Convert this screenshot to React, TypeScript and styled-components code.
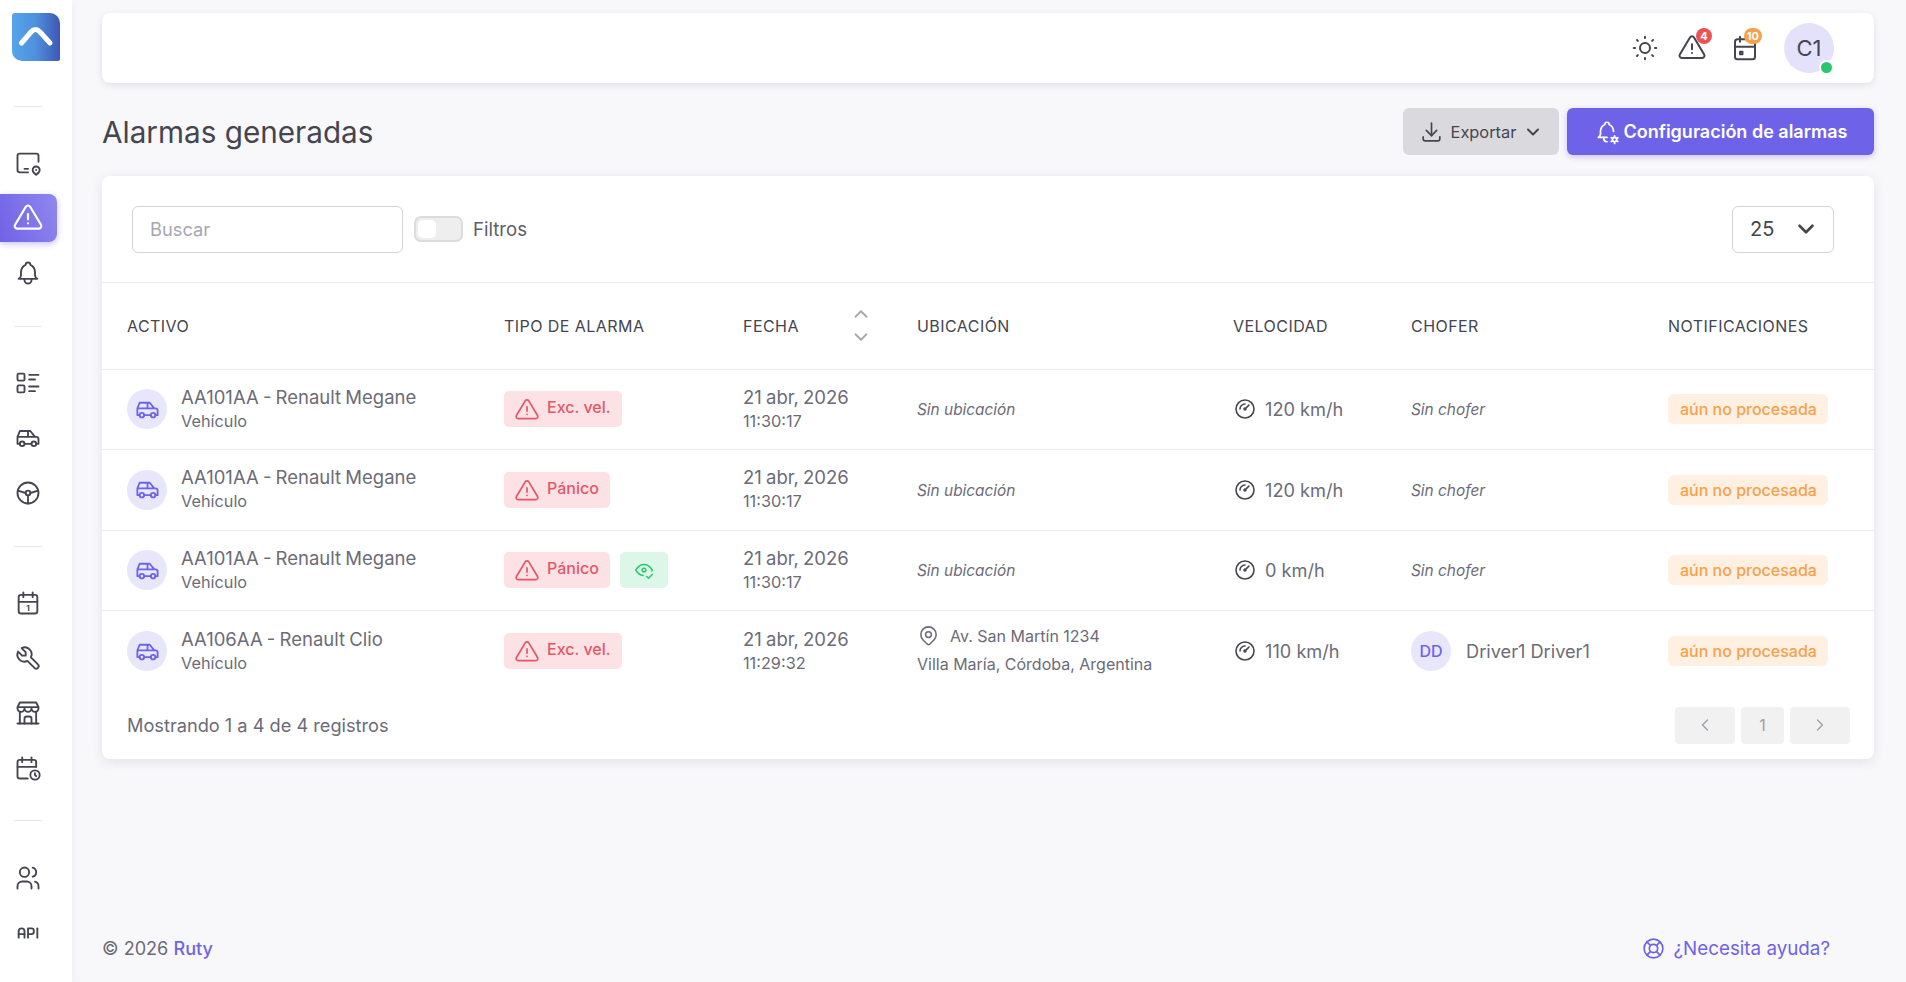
import React from 'react';
import styled, { createGlobalStyle } from 'styled-components';
import {
  TbAlertTriangle,
  TbApi,
  TbBell,
  TbBellCog,
  TbBuildingStore,
  TbCalendarEvent,
  TbCalendarTime,
  TbCar,
  TbChevronDown,
  TbChevronLeft,
  TbChevronRight,
  TbChevronUp,
  TbDeviceIpadHorizontalPin,
  TbDownload,
  TbEyeCheck,
  TbGauge,
  TbLifebuoy,
  TbListDetails,
  TbMapPin,
  TbSteeringWheel,
  TbSun,
  TbTool,
  TbUsers,
} from 'react-icons/tb';

interface Alarm {
  id: number;
  name: string;
  type: string;
  seen?: boolean;
  time: string;
  address?: string[];
  speed: string;
  driver?: string;
}

const alarms: Alarm[] = [
  { id: 1, name: 'AA101AA - Renault Megane', type: 'Exc. vel.', time: '11:30:17', speed: '120 km/h' },
  { id: 2, name: 'AA101AA - Renault Megane', type: 'Pánico', time: '11:30:17', speed: '120 km/h' },
  { id: 3, name: 'AA101AA - Renault Megane', type: 'Pánico', seen: true, time: '11:30:17', speed: '0 km/h' },
  {
    id: 4,
    name: 'AA106AA - Renault Clio',
    type: 'Exc. vel.',
    time: '11:29:32',
    address: ['Av. San Martín 1234', 'Villa María, Córdoba, Argentina'],
    speed: '110 km/h',
    driver: 'Driver1 Driver1',
  },
];

const GlobalStyle = createGlobalStyle`
  html, body {
    margin: 0;
    padding: 0;
    height: 100%;
    background: #f8f8fb;
    font-family: Inter, "Liberation Sans", sans-serif;
    color: #6c6b77;
  }
  * { box-sizing: border-box; }
  svg { stroke-width: 1.6; }
`;

const Layout = styled.div`
  display: flex;
  height: 982px;
  overflow: hidden;
`;

const Sidebar = styled.aside`
  width: 72px;
  flex-shrink: 0;
  background: #fff;
  box-shadow: 0 2px 8px rgba(75, 70, 92, 0.08);
  display: flex;
  flex-direction: column;
  padding-top: 13px;
`;

const Logo = styled.div`
  width: 48px;
  height: 48px;
  margin-left: 12px;
  border-radius: 3px 10px 2px 10px;
  background: linear-gradient(90deg, #55a5ea 0%, #4f8fdc 50%, #3e57b5 100%);
  display: flex;
`;

const Divider = styled.div<{ $top: number; $bottom: number }>`
  width: 28px;
  height: 1px;
  background: #e6e6ea;
  margin: ${(p) => p.$top}px 0 ${(p) => p.$bottom}px 14px;
`;

const NavItem = styled.div<{ $active?: boolean }>`
  width: 57px;
  height: 48px;
  margin-bottom: 7px;
  padding-right: 2px;
  border-radius: 0 8px 8px 0;
  display: flex;
  align-items: center;
  justify-content: center;
  color: ${(p) => (p.$active ? '#fff' : '#45454f')};
  background: ${(p) => (p.$active ? 'linear-gradient(72deg, #6f63e6 0%, #9087ee 100%)' : 'transparent')};
  box-shadow: ${(p) => (p.$active ? '0 2px 6px rgba(115, 103, 240, 0.4)' : 'none')};
  font-size: 28px;
`;

const Main = styled.main`
  flex: 1;
  min-width: 0;
  padding: 13px 32px 0 30px;
  display: flex;
  flex-direction: column;
`;

const Topbar = styled.header`
  height: 70px;
  background: #fff;
  border-radius: 8px;
  box-shadow: 0 2px 6px rgba(75, 70, 92, 0.14);
  display: flex;
  align-items: center;
  justify-content: flex-end;
  padding-right: 40px;
  flex-shrink: 0;
`;

const TopIcon = styled.div<{ $gap: number }>`
  position: relative;
  display: flex;
  color: #45454f;
  font-size: 30px;
  margin-right: ${(p) => p.$gap}px;
`;

const CountBadge = styled.span<{ $bg: string; $right: number }>`
  position: absolute;
  top: -5px;
  right: ${(p) => p.$right}px;
  min-width: 16px;
  height: 16px;
  padding: 0 3px;
  border-radius: 8px;
  background: ${(p) => p.$bg};
  color: #fff;
  font-size: 11px;
  font-weight: 700;
  line-height: 16px;
  text-align: center;
`;

const UserAvatar = styled.div`
  position: relative;
  width: 50px;
  height: 50px;
  border-radius: 50%;
  background: #e4e2fa;
  color: #45454f;
  font-size: 22px;
  display: flex;
  align-items: center;
  justify-content: center;
`;

const OnlineDot = styled.span`
  position: absolute;
  right: 2px;
  bottom: 0;
  width: 11px;
  height: 11px;
  border-radius: 50%;
  background: #28c76f;
  box-shadow: 0 0 0 2px #fff;
`;

const TitleRow = styled.div`
  display: flex;
  align-items: center;
  justify-content: space-between;
  height: 47px;
  margin: 25px 0 21px;
  flex-shrink: 0;
`;

const Title = styled.h1`
  margin: 0;
  font-size: 29.7px;
  font-weight: 400;
  color: #45454f;
`;

const Actions = styled.div`
  display: flex;
  gap: 8px;
`;

const ExportButton = styled.button`
  width: 156px;
  height: 47px;
  border: none;
  border-radius: 6px;
  background: #dadade;
  color: #45454f;
  font-family: inherit;
  font-size: 16.4px;
  display: flex;
  align-items: center;
  justify-content: center;
  gap: 7px;
  svg:last-child { stroke-width: 2.4; }
`;

const ConfigButton = styled.button`
  width: 307px;
  height: 47px;
  border: none;
  border-radius: 6px;
  background: #6e63e8;
  box-shadow: 0 2px 6px rgba(115, 103, 240, 0.35);
  color: #fff;
  font-family: inherit;
  font-size: 18px;
  font-weight: 600;
  display: flex;
  align-items: center;
  justify-content: center;
  gap: 4px;
`;

const Card = styled.section`
  background: #fff;
  border-radius: 8px;
  box-shadow: 0 3px 12px rgba(75, 70, 92, 0.12);
  flex-shrink: 0;
`;

const CardTools = styled.div`
  height: 107px;
  display: flex;
  align-items: center;
  padding: 0 40px 0 30px;
  border-bottom: 1px solid #ececef;
`;

const Search = styled.input`
  width: 271px;
  height: 47px;
  border: 1px solid #d4d3d9;
  border-radius: 6px;
  padding: 0 17px;
  font-family: inherit;
  font-size: 18.3px;
  color: #45454f;
  &::placeholder { color: #a8a6b2; }
`;

const Toggle = styled.div`
  width: 49px;
  height: 26px;
  margin-left: 11px;
  border-radius: 7px;
  background: #eeeeef;
  border: 2px solid #dcdce0;
  padding: 2px;
  display: flex;
`;

const ToggleKnob = styled.span`
  width: 18px;
  height: 18px;
  border-radius: 5px;
  background: #fff;
`;

const ToggleLabel = styled.span`
  margin-left: 10px;
  font-size: 18.6px;
  color: #5d5c68;
`;

const PageSize = styled.div`
  margin-left: auto;
  width: 102px;
  height: 47px;
  border: 1px solid #d4d3d9;
  border-radius: 6px;
  padding: 0 14px 0 17px;
  font-size: 20px;
  color: #45454f;
  display: flex;
  align-items: center;
  justify-content: space-between;
  svg { stroke-width: 2.4; }
`;

const Table = styled.table`
  width: 100%;
  border-collapse: collapse;
  table-layout: fixed;
`;

const Head = styled.th`
  height: 86px;
  padding: 0 0 0 25px;
  text-align: left;
  font-size: 16px;
  font-weight: 400;
  letter-spacing: 0.45px;
  color: #45454f;
  border-bottom: 1px solid #ececef;
`;

const SortHead = styled.div`
  display: flex;
  align-items: center;
  justify-content: space-between;
  padding-right: 20px;
`;

const SortArrows = styled.div`
  display: flex;
  flex-direction: column;
  gap: 1px;
  color: #a8a6b2;
  font-size: 22px;
  svg { stroke-width: 2; }
`;

const Row = styled.tr`
  height: 80.5px;
  & + & td { border-top: 1px solid #ececef; }
`;

const Cell = styled.td`
  padding: 0 0 0 25px;
  vertical-align: middle;
`;

const Asset = styled.div`
  display: flex;
  align-items: center;
  gap: 14px;
`;

const Round = styled.div`
  width: 40px;
  height: 40px;
  border-radius: 50%;
  background: #e8e6fb;
  color: #6e63e8;
  font-size: 16px;
  font-weight: 500;
  flex-shrink: 0;
  display: flex;
  align-items: center;
  justify-content: center;
`;

const Stack = styled.div`
  display: flex;
  flex-direction: column;
`;

const Primary = styled.span`
  font-size: 18.5px;
  line-height: 24px;
  word-spacing: -1px;
  white-space: nowrap;
`;

const Secondary = styled.span`
  font-size: 16.3px;
  line-height: 25px;
  white-space: nowrap;
`;

const Badges = styled.div`
  display: flex;
  gap: 10px;
`;

const AlarmBadge = styled.span`
  height: 36px;
  padding: 0 11px 4px 10px;
  border-radius: 5px;
  background: #fce2e4;
  color: #e4576a;
  font-size: 16px;
  font-weight: 500;
  display: inline-flex;
  align-items: center;
  gap: 7px;
  svg { font-size: 26px; margin-bottom: -6px; }
`;

const SeenBadge = styled.span`
  width: 48px;
  height: 36px;
  border-radius: 5px;
  background: #dcf6e7;
  color: #28c76f;
  font-size: 22px;
  display: inline-flex;
  align-items: center;
  justify-content: center;
`;

const Muted = styled.span`
  font-size: 15.4px;
  font-style: italic;
  white-space: nowrap;
`;

const AddressLine = styled.div`
  display: flex;
  align-items: center;
  gap: 10px;
  font-size: 16px;
  line-height: 24px;
  white-space: nowrap;
  svg { font-size: 23px; }
`;

const AddressCity = styled.div`
  margin: 5px 0 4px;
  font-size: 16px;
  line-height: 22px;
  white-space: nowrap;
`;

const Speed = styled.div`
  display: flex;
  align-items: center;
  gap: 8px;
  font-size: 18.2px;
  white-space: nowrap;
  svg { font-size: 24px; color: #45454f; }
`;

const Driver = styled.div`
  display: flex;
  align-items: center;
  gap: 15px;
  font-size: 18.2px;
  white-space: nowrap;
`;

const StatusBadge = styled.span`
  display: inline-block;
  height: 30px;
  padding: 0 11px 0 12px;
  border-radius: 6px;
  background: #fff0e1;
  color: #f7a14c;
  font-size: 16px;
  font-weight: 500;
  line-height: 30px;
  white-space: nowrap;
`;

const CardFooter = styled.div`
  display: flex;
  align-items: center;
  justify-content: space-between;
  height: 68px;
  padding: 0 24px 0 25px;
  font-size: 18.2px;
`;

const Pagination = styled.div`
  display: flex;
  gap: 6px;
`;

const PageButton = styled.div<{ $wide?: boolean }>`
  width: ${(p) => (p.$wide ? 60 : 43)}px;
  height: 37px;
  border-radius: 4px;
  background: #f1f1f2;
  color: #a0a0a6;
  font-size: 16px;
  display: flex;
  align-items: center;
  justify-content: center;
`;

const PageFooter = styled.footer`
  margin-top: auto;
  height: 68px;
  display: flex;
  justify-content: space-between;
  align-items: center;
  font-size: 18.1px;
  padding-right: 44px;
`;

const Brand = styled.span`
  color: #6e63e8;
  font-weight: 500;
`;

const Help = styled.div`
  display: flex;
  gap: 8px;
  color: #6e63e8;
  align-items: center;
  font-size: 18.8px;
  svg { font-size: 25px; }
`;

function CalendarOneIcon() {
  return (
    <svg width="1em" height="1em" viewBox="0 0 24 24" fill="none" stroke="currentColor" strokeLinecap="round" strokeLinejoin="round">
      <rect x="4" y="5" width="16" height="16" rx="2" />
      <path d="M16 3v4M8 3v4M4 11h16" />
      <text x="12" y="18.6" textAnchor="middle" fontSize="7" fontWeight="700" fill="currentColor" stroke="none">1</text>
    </svg>
  );
}

export default function App() {
  return (
    <>
      <GlobalStyle />
      <Layout>
        <Sidebar>
          <Logo>
            <svg width="48" height="48" viewBox="0 0 48 48" fill="none">
              <path d="M9.5 30 L19 19 Q23.5 14 28 19 L38 30" stroke="#fff" strokeWidth="5" strokeLinecap="round" strokeLinejoin="round" />
            </svg>
          </Logo>
          <Divider $top={45} $bottom={32} />
          <NavItem><TbDeviceIpadHorizontalPin /></NavItem>
          <NavItem $active><TbAlertTriangle size={32} /></NavItem>
          <NavItem><TbBell /></NavItem>
          <Divider $top={22} $bottom={32} />
          <NavItem><TbListDetails /></NavItem>
          <NavItem><TbCar /></NavItem>
          <NavItem><TbSteeringWheel /></NavItem>
          <Divider $top={22} $bottom={32} />
          <NavItem><CalendarOneIcon /></NavItem>
          <NavItem><TbTool /></NavItem>
          <NavItem><TbBuildingStore /></NavItem>
          <NavItem><TbCalendarTime /></NavItem>
          <Divider $top={21} $bottom={33} />
          <NavItem><TbUsers /></NavItem>
          <NavItem><TbApi /></NavItem>
        </Sidebar>
        <Main>
          <Topbar>
            <TopIcon $gap={17}><TbSun /></TopIcon>
            <TopIcon $gap={23}><TbAlertTriangle /><CountBadge $bg="#ea5455" $right={-5}>4</CountBadge></TopIcon>
            <TopIcon $gap={24}><TbCalendarEvent /><CountBadge $bg="#f7a14c" $right={-2}>10</CountBadge></TopIcon>
            <UserAvatar>C1<OnlineDot /></UserAvatar>
          </Topbar>
          <TitleRow>
            <Title>Alarmas generadas</Title>
            <Actions>
              <ExportButton><TbDownload size={25} />Exportar<TbChevronDown size={20} /></ExportButton>
              <ConfigButton><TbBellCog size={26} />Configuración de alarmas</ConfigButton>
            </Actions>
          </TitleRow>
          <Card>
            <CardTools>
              <Search placeholder="Buscar" />
              <Toggle><ToggleKnob /></Toggle>
              <ToggleLabel>Filtros</ToggleLabel>
              <PageSize>25<TbChevronDown size={26} /></PageSize>
            </CardTools>
            <Table>
              <colgroup>
                <col width="377" />
                <col width="239" />
                <col width="174" />
                <col width="316" />
                <col width="178" />
                <col width="257" />
                <col width="231" />
              </colgroup>
              <thead>
                <tr>
                  <Head>ACTIVO</Head>
                  <Head>TIPO DE ALARMA</Head>
                  <Head>
                    <SortHead>
                      FECHA
                      <SortArrows><TbChevronUp /><TbChevronDown /></SortArrows>
                    </SortHead>
                  </Head>
                  <Head>UBICACIÓN</Head>
                  <Head>VELOCIDAD</Head>
                  <Head>CHOFER</Head>
                  <Head>NOTIFICACIONES</Head>
                </tr>
              </thead>
              <tbody>
                {alarms.map((a) => (
                  <Row key={a.id}>
                    <Cell>
                      <Asset>
                        <Round><TbCar size={27} /></Round>
                        <Stack>
                          <Primary>{a.name}</Primary>
                          <Secondary>Vehículo</Secondary>
                        </Stack>
                      </Asset>
                    </Cell>
                    <Cell>
                      <Badges>
                        <AlarmBadge><TbAlertTriangle />{a.type}</AlarmBadge>
                        {a.seen && <SeenBadge><TbEyeCheck /></SeenBadge>}
                      </Badges>
                    </Cell>
                    <Cell>
                      <Stack>
                        <Primary>21 abr, 2026</Primary>
                        <Secondary>{a.time}</Secondary>
                      </Stack>
                    </Cell>
                    <Cell>
                      {a.address ? (
                        <>
                          <AddressLine><TbMapPin />{a.address[0]}</AddressLine>
                          <AddressCity>{a.address[1]}</AddressCity>
                        </>
                      ) : (
                        <Muted>Sin ubicación</Muted>
                      )}
                    </Cell>
                    <Cell>
                      <Speed><TbGauge />{a.speed}</Speed>
                    </Cell>
                    <Cell>
                      {a.driver ? (
                        <Driver><Round>DD</Round>{a.driver}</Driver>
                      ) : (
                        <Muted>Sin chofer</Muted>
                      )}
                    </Cell>
                    <Cell>
                      <StatusBadge>aún no procesada</StatusBadge>
                    </Cell>
                  </Row>
                ))}
              </tbody>
            </Table>
            <CardFooter>
              Mostrando 1 a 4 de 4 registros
              <Pagination>
                <PageButton $wide><TbChevronLeft size={20} /></PageButton>
                <PageButton>1</PageButton>
                <PageButton $wide><TbChevronRight size={20} /></PageButton>
              </Pagination>
            </CardFooter>
          </Card>
          <PageFooter>
            <span>© 2026 <Brand>Ruty</Brand></span>
            <Help><TbLifebuoy />¿Necesita ayuda?</Help>
          </PageFooter>
        </Main>
      </Layout>
    </>
  );
}
